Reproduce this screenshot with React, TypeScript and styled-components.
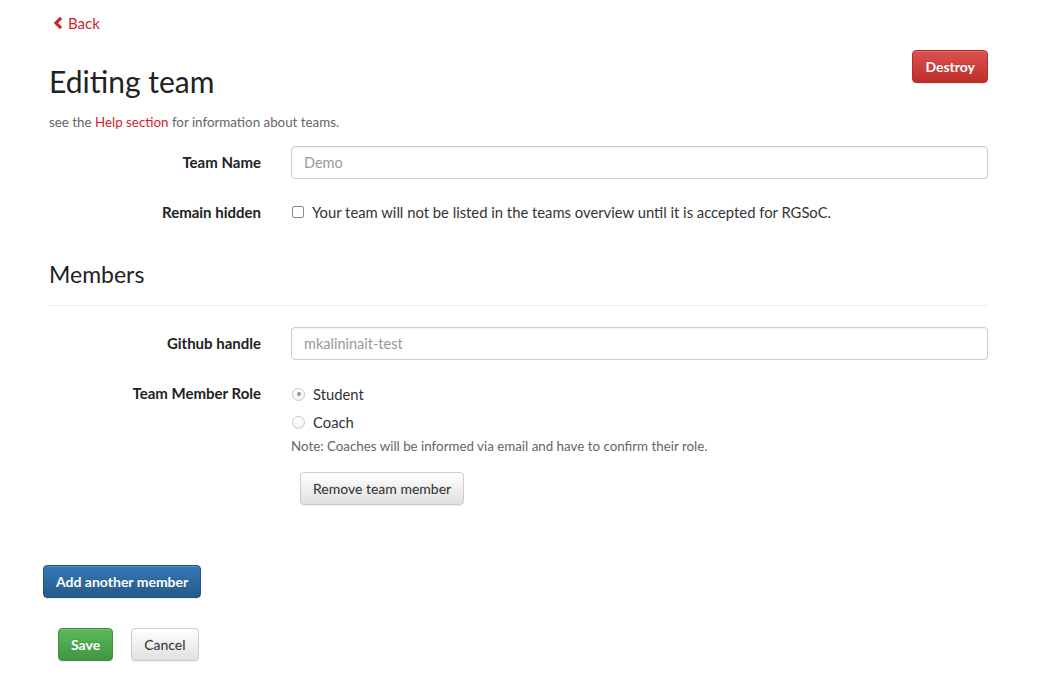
import styled, { createGlobalStyle, css } from "styled-components";

const GlobalStyle = createGlobalStyle`
  body {
    margin: 0;
    background: #fff;
    font-family: Lato, "Open Sans", "Liberation Sans", sans-serif;
    font-size: 14px;
    line-height: 20px;
    color: #333;
  }
`;

const colors = {
  red: "#d0242b",
  text: "#333",
  muted: "#666",
  border: "#ccc",
  placeholder: "#999",
};

const Page = styled.div`
  padding: 13px 56px 40px 49px;
`;

const BackLink = styled.a`
  display: inline-flex;
  align-items: center;
  gap: 5px;
  margin-left: 4px;
  color: ${colors.red};
  font-size: 15px;
  text-decoration: none;
`;

const Header = styled.div`
  display: flex;
  justify-content: space-between;
  align-items: flex-start;
  margin-top: 15px;
`;

const Title = styled.h1`
  margin: 15px 0 0;
  font-size: 30px;
  font-weight: 400;
  line-height: 33px;
  color: #222;
`;

const Intro = styled.p`
  margin: 15px 0 15px;
  font-size: 13.35px;
  line-height: 18px;
  color: ${colors.muted};
`;

const Link = styled.a`
  color: ${colors.red};
  text-decoration: none;
`;

const FormRow = styled.div`
  display: grid;
  grid-template-columns: 212px 1fr;
  column-gap: 30px;
  margin-bottom: 17px;
`;

const Label = styled.label`
  text-align: right;
  font-size: 15px;
  font-weight: 700;
  padding-top: 6px;
  line-height: 20px;
  color: #222;
`;

const Input = styled.input`
  box-sizing: border-box;
  width: 100%;
  height: 33px;
  padding: 6px 12px;
  border: 1px solid ${colors.border};
  border-radius: 4px;
  font-family: inherit;
  font-size: 14.5px;
  color: ${colors.text};
  box-shadow: inset 0 1px 1px rgba(0, 0, 0, 0.04);
  &::placeholder {
    color: ${colors.placeholder};
  }
`;

const Inline = styled.div`
  display: flex;
  align-items: center;
  gap: 8px;
  padding-top: 6px;
  line-height: 20px;
  font-size: 14.8px;
`;

const Checkbox = styled.span`
  box-sizing: border-box;
  width: 12px;
  height: 12px;
  margin-left: 1px;
  border: 1px solid #8a8a8a;
  border-radius: 2px;
`;

const Radio = styled.span<{ checked?: boolean }>`
  box-sizing: border-box;
  position: relative;
  width: 13px;
  height: 13px;
  margin-left: 1px;
  border: 1px solid #c8c8c8;
  border-radius: 50%;
  background: linear-gradient(#fff, #f4f4f4);
  ${({ checked }) =>
    checked &&
    css`
      &::after {
        content: "";
        position: absolute;
        left: 3.5px;
        top: 3.5px;
        width: 4px;
        height: 4px;
        border-radius: 50%;
        background: #999;
      }
    `}
`;

const SectionTitle = styled.h3`
  margin: 40px 0 21px;
  padding-bottom: 19px;
  border-bottom: 1px solid #eee;
  font-size: 23px;
  font-weight: 400;
  line-height: 24px;
  color: #222;
`;

const RoleGroup = styled.div`
  display: flex;
  flex-direction: column;
  align-items: flex-start;
`;

const RadioOption = styled(Inline)<{ $first?: boolean }>`
  padding-top: ${({ $first }) => ($first ? "7px" : "8px")};
`;

const Note = styled.p`
  margin: 5px 0 17px;
  font-size: 13.35px;
  line-height: 18px;
  color: ${colors.muted};
`;

type Variant = "danger" | "primary" | "success" | "default";

const variants: Record<Variant, ReturnType<typeof css>> = {
  danger: css`
    color: #fff;
    font-weight: 700;
    background: linear-gradient(#d9534f, #c12e2a);
    border-color: #b92c28;
  `,
  primary: css`
    color: #fff;
    font-weight: 700;
    background: linear-gradient(#3479b6, #265a88);
    border-color: #245580;
  `,
  success: css`
    color: #fff;
    font-weight: 700;
    background: linear-gradient(#5cb85c, #419641);
    border-color: #3e8f3e;
  `,
  default: css`
    color: ${colors.text};
    font-weight: 400;
    background: linear-gradient(#fff, #e0e0e0);
    border-color: #ccc;
  `,
};

const Button = styled.button<{ variant: Variant }>`
  box-sizing: border-box;
  height: 33px;
  padding: 0 12px;
  border: 1px solid;
  border-radius: 4px;
  font-family: inherit;
  font-size: 14px;
  line-height: 20px;
  text-shadow: 0 -1px 0 rgba(0, 0, 0, 0.1);
  box-shadow: inset 0 1px 0 rgba(255, 255, 255, 0.15), 0 1px 1px rgba(0, 0, 0, 0.075);
  cursor: pointer;
  ${({ variant }) => variants[variant]}
`;

const RemoveButton = styled(Button)`
  margin-left: 9px;
`;

const AddRow = styled.div`
  margin: 60px 0 0 -6px;
`;

const Actions = styled.div`
  display: flex;
  gap: 18px;
  margin: 30px 0 0 9px;
`;

const Chevron = () => (
  <svg width="10" height="14" viewBox="0 0 10 14">
    <path d="M8 1.8 3 7 8 12.2" fill="none" stroke="currentColor" strokeWidth="3.2" />
  </svg>
);

export default function App() {
  return (
    <Page>
      <GlobalStyle />
      <BackLink href="#">
        <Chevron />
        Back
      </BackLink>
      <Header>
        <Title>Editing team</Title>
        <Button variant="danger">Destroy</Button>
      </Header>
      <Intro>
        see the <Link href="#">Help section</Link> for information about teams.
      </Intro>

      <FormRow>
        <Label>Team Name</Label>
        <Input placeholder="Demo" />
      </FormRow>
      <FormRow>
        <Label>Remain hidden</Label>
        <Inline>
          <Checkbox />
          Your team will not be listed in the teams overview until it is accepted for RGSoC.
        </Inline>
      </FormRow>

      <SectionTitle>Members</SectionTitle>

      <FormRow>
        <Label>Github handle</Label>
        <Input placeholder="mkalininait-test" />
      </FormRow>
      <FormRow>
        <Label>Team Member Role</Label>
        <RoleGroup>
          <RadioOption $first>
            <Radio checked />
            Student
          </RadioOption>
          <RadioOption>
            <Radio />
            Coach
          </RadioOption>
          <Note>Note: Coaches will be informed via email and have to confirm their role.</Note>
          <RemoveButton variant="default">Remove team member</RemoveButton>
        </RoleGroup>
      </FormRow>

      <AddRow>
        <Button variant="primary">Add another member</Button>
      </AddRow>
      <Actions>
        <Button variant="success">Save</Button>
        <Button variant="default">Cancel</Button>
      </Actions>
    </Page>
  );
}
